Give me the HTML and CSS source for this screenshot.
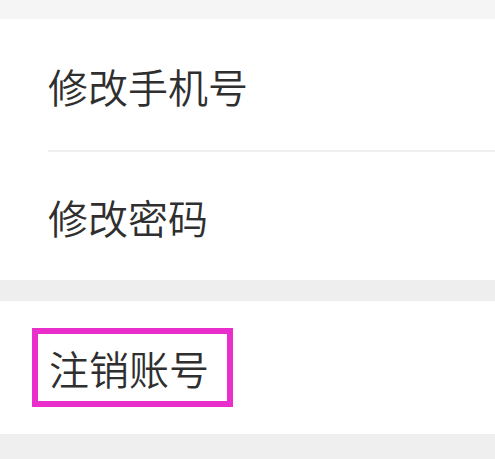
FILE: index.html
```html
<!DOCTYPE html>
<html>
<head>
    <title>账号与安全</title>
    <link rel="stylesheet" href="styles.css">
</head>
<body>
    <div class="settings-page">
        <div class="group">
            <div class="row">
                <span class="row-label">修改手机号</span>
            </div>
            <div class="row">
                <span class="row-label">修改密码</span>
            </div>
        </div>
        <div class="group">
            <div class="row row-marked">
                <span class="row-label marked">注销账号</span>
            </div>
        </div>
    </div>
</body>
</html>
```

FILE: styles.css
```css
body {
    margin: 0;
    background-color: #efefef;
    font-family: "Noto Sans CJK SC", "Noto Sans", sans-serif;
    color: #2f2f2f;
}
.settings-page {
    display: flex;
    flex-direction: column;
    padding-top: 19px;
    background-color: #f5f5f5;
}
.group {
    background-color: white;
}
.group:first-child {
    border-bottom: 21px solid #eeeeee;
}
.row {
    display: flex;
    align-items: center;
    height: 131px;
    padding-left: 48px;
    box-sizing: border-box;
}
.row + .row {
    position: relative;
    height: 130px;
    padding-top: 2px;
}
.row + .row::before {
    content: "";
    position: absolute;
    top: 0;
    left: 48px;
    right: 0;
    height: 2px;
    background-color: #f0f0f0;
}
.row-label {
    font-size: 40px;
    font-weight: 350;
    line-height: 52px;
    padding-top: 2px;
}
.row-marked {
    height: 133px;
    padding-left: 32px;
}
.marked {
    border: 6px solid #ea2ecb;
    padding: 8px 18px 7px 11px;
}
```
